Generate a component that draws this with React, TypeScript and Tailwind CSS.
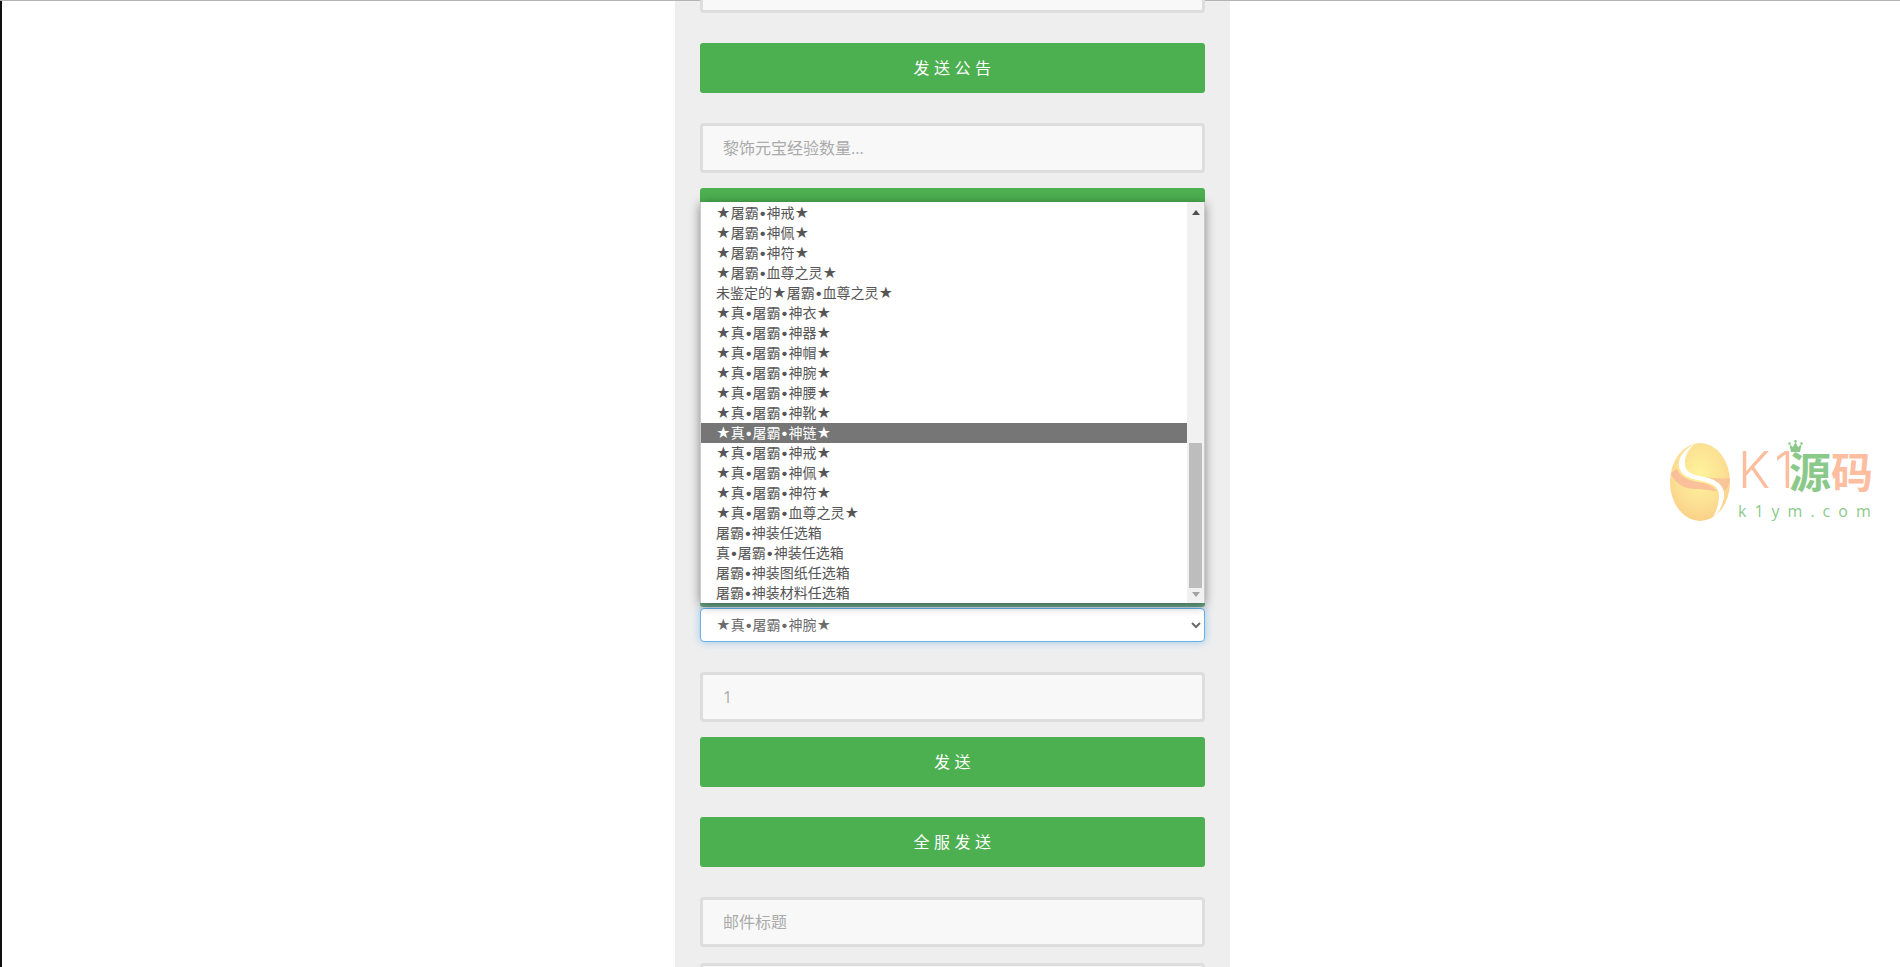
const items = [
  "★屠霸•神戒★",
  "★屠霸•神佩★",
  "★屠霸•神符★",
  "★屠霸•血尊之灵★",
  "未鉴定的★屠霸•血尊之灵★",
  "★真•屠霸•神衣★",
  "★真•屠霸•神器★",
  "★真•屠霸•神帽★",
  "★真•屠霸•神腕★",
  "★真•屠霸•神腰★",
  "★真•屠霸•神靴★",
  "★真•屠霸•神链★",
  "★真•屠霸•神戒★",
  "★真•屠霸•神佩★",
  "★真•屠霸•神符★",
  "★真•屠霸•血尊之灵★",
  "屠霸•神装任选箱",
  "真•屠霸•神装任选箱",
  "屠霸•神装图纸任选箱",
  "屠霸•神装材料任选箱",
];

const selectedIndex = 11;

function TextField({ placeholder, className = "" }: { placeholder?: string; className?: string }) {
  return (
    <input
      placeholder={placeholder}
      className={`block h-[50px] w-full shrink-0 rounded-[4px] border-[3px] border-[#ddd] bg-[#f8f8f8] px-5 text-base text-[#555] outline-none placeholder:text-[#aaa] ${className}`}
    />
  );
}

function GreenButton({ label, className = "" }: { label?: string; className?: string }) {
  return (
    <button className={`block h-[50px] w-full shrink-0 rounded-[3px] bg-[#4caf50] pl-1 text-base tracking-[4.5px] text-white ${className}`}>
      {label}
    </button>
  );
}

function Dropdown() {
  return (
    <div className="absolute left-[25px] top-[201px] flex h-[401px] w-[505px] border-x border-[#ccc] bg-white font-['Inter','DejaVu_Sans','Noto_Sans_CJK_SC',sans-serif] text-sm leading-5 text-[#555] shadow-[0_2px_10px_rgba(0,0,0,0.45)]">
      <ul className="flex-1 pt-px">
        {items.map((item, i) => (
          <li
            key={item}
            className={`h-5 whitespace-nowrap pl-[15px] ${i === selectedIndex ? "bg-[#767676] text-white" : ""}`}
          >
            {item}
          </li>
        ))}
      </ul>
      <div className="flex w-[17px] flex-col items-center bg-[#f1f1f1]">
        <svg width="8" height="5" viewBox="0 0 8 5" className="mt-2 fill-[#505050]">
          <path d="M4 0 8 5H0Z" />
        </svg>
        <div className="mt-[228px] h-[145px] w-[13px] bg-[#bdbdbd]" />
        <svg width="8" height="5" viewBox="0 0 8 5" className="mt-[4px] fill-[#a3a3a3]">
          <path d="M0 0H8L4 5Z" />
        </svg>
      </div>
    </div>
  );
}

function Watermark() {
  return (
    <div className="pointer-events-none absolute left-[1670px] top-[441px] flex items-start gap-[8px] opacity-75">
      <svg width="60" height="82" viewBox="0 0 60 82">
        <defs>
          <radialGradient id="egg" cx="50%" cy="40%" r="65%">
            <stop offset="0%" stopColor="#fff07a" />
            <stop offset="60%" stopColor="#fbd770" />
            <stop offset="100%" stopColor="#f8bd60" />
          </radialGradient>
        </defs>
        <ellipse cx="30" cy="41" rx="30" ry="39" fill="url(#egg)" />
        <path d="M1 33C6 44 16 48 26 48 34 48 42 50 47 50 42 44 36 42 28 41 18 39 10 36 7 28 4 29 2 31 1 33Z" fill="#f7a27a" opacity="0.85" />
        <path d="M34 36C42 37 52 42 54 51 58 46 60 42 60 37 52 38 42 37 34 36Z" fill="#f7a27a" opacity="0.7" />
        <path d="M26 2C12 9 6 20 10 29 14 37 24 38 32 40 42 42 49 46 49 54 49 62 47 70 42 78 50 71 55 60 54 51 52 42 44 38 34 36 24 34 16 32 15 24 14 16 18 8 26 2Z" fill="#fff" />
      </svg>
      <div className="flex w-[134px] flex-col pt-[4px]">
        <div className="relative flex h-[50px] items-center font-['Noto_Sans_CJK_SC',sans-serif] text-[42px] leading-none text-[#fda77f]">
          <span className="w-[51px] font-['Inter',sans-serif] text-[50px] font-light tracking-[4px]">K1</span>
          <span className="font-bold text-[#64b864]">源</span>
          <span className="font-bold">码</span>
          <svg width="15" height="13" viewBox="0 0 15 13" className="absolute left-[50px] top-[-5px] fill-[#64b864]">
            <path d="M3 12 1.5 4.500 5 7l2.500-5L10 7l3.500-2.500L12 12Z" />
            <circle cx="1.500" cy="3.500" r="1.300" />
            <circle cx="7.500" cy="1.300" r="1.300" />
            <circle cx="13.500" cy="3.500" r="1.300" />
          </svg>
        </div>
        <div className="mt-[6px] font-['Open_Sans',sans-serif] text-base leading-5 tracking-[8px] text-[#64b864]">k1ym.com</div>
      </div>
    </div>
  );
}

export default function App() {
  return (
    <div className="relative flex h-[967px] flex-col overflow-hidden bg-white font-['Open_Sans','Noto_Sans_CJK_SC',sans-serif]">
      <div className="h-px shrink-0 bg-[#b4b4b4]" />
      <div className="flex min-h-0 flex-1">
        <div className="w-[2px] shrink-0 bg-[#111]" />
        <div className="relative ml-[673px] flex w-[555px] flex-col bg-[#eee] px-[25px]">
          <TextField className="mt-[-38px]" />
          <GreenButton label="发送公告" className="mt-[30px]" />
          <TextField placeholder="黎饰元宝经验数量..." className="mt-[30px]" />
          <GreenButton className="mt-[15px]" />
          <GreenButton className="mt-[319px] bg-[#6ea87a]" />
          <select
            defaultValue="★真•屠霸•神腕★"
            className="mt-px block h-[34px] w-full shrink-0 rounded-[4px] border border-[#66afe9] bg-white pb-[2px] pl-[11px] pr-3 font-['Inter','DejaVu_Sans','Noto_Sans_CJK_SC',sans-serif] text-sm text-[#6b6b6b] shadow-[0_0_8px_rgba(102,175,233,0.6)] outline-none"
          >
            {items.map((item) => (
              <option key={item}>{item}</option>
            ))}
          </select>
          <TextField placeholder="1" className="mt-[30px]" />
          <GreenButton label="发送" className="mt-[15px]" />
          <GreenButton label="全服发送" className="mt-[30px]" />
          <TextField placeholder="邮件标题" className="mt-[30px]" />
          <TextField className="mt-[16px]" />
          <Dropdown />
        </div>
      </div>
      <Watermark />
    </div>
  );
}
